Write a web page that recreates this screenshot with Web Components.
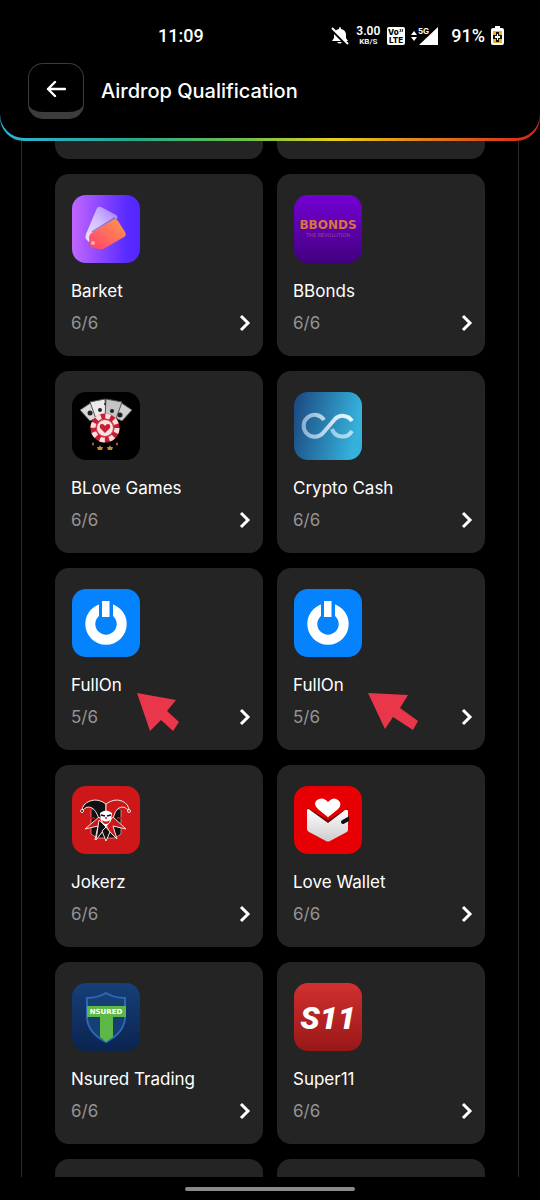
<!DOCTYPE html>
<html lang="en">
<head>
<meta charset="utf-8">
<meta name="viewport" content="width=device-width, initial-scale=1">
<title>Airdrop Qualification</title>
<style>
    body {
        margin: 0;
        background: #000;
        color: #fff;
        font-family: Inter, "Liberation Sans", sans-serif;
    }
</style>
</head>
<body>
<airdrop-app>
    <status-bar slot="top"></status-bar>
    <page-header slot="top">Airdrop Qualification</page-header>

    <app-card cut></app-card>
    <app-card cut></app-card>

    <app-card name="Barket" count="6/6">
        <svg slot="logo" viewBox="0 0 68 68" aria-hidden="true">
            <defs>
                <linearGradient id="barket-bg"><stop stop-color="#c266ff"/><stop offset=".8" stop-color="#5a2bff"/><stop offset="1" stop-color="#5426ff"/></linearGradient>
                <linearGradient id="barket-tag" x1="0" y1="1" x2="1" y2="0"><stop stop-color="#ff4070"/><stop offset="1" stop-color="#ff9a4c"/></linearGradient>
                <linearGradient id="barket-back" x1="0" y1="1" x2="1" y2="0"><stop stop-color="#efe4ff"/><stop offset=".5" stop-color="#d3bdff"/><stop offset="1" stop-color="#9d78f8"/></linearGradient>
            </defs>
            <rect width="68" height="68" fill="url(#barket-bg)"/>
            <path d="M25 13q2-2 4-1l15 8q2 1 1 4L21 38l-4 9-3-3q-1-2 0-5z" fill="url(#barket-back)"/>
            <path d="M20 37l23-14" stroke="#5b3aa8" stroke-width="2" opacity=".5"/>
            <path d="M21 37l20-12q3-2 5 1l7 11q2 3-1 5L33 53q-3 2-6 1l-7-1q-2-1-2-4l-1-6q0-4 4-6z" fill="url(#barket-tag)"/>
            <circle cx="21" cy="48" r="2" fill="#ffb0b0"/>
        </svg>
    </app-card>

    <app-card name="BBonds" count="6/6">
        <svg slot="logo" viewBox="0 0 68 68" aria-hidden="true">
            <defs>
                <linearGradient id="bbonds-bg" x2="0" y2="1"><stop stop-color="#7400d4"/><stop offset="1" stop-color="#430080"/></linearGradient>
            </defs>
            <rect width="68" height="68" fill="url(#bbonds-bg)"/>
            <text x="34" y="34" text-anchor="middle" font-family="DejaVu Sans" font-weight="700" font-size="12" fill="#d9733f">BBONDS</text>
            <text x="34" y="42" text-anchor="middle" font-family="DejaVu Sans" font-size="5" fill="#a2449a">THE REVOLUTION</text>
        </svg>
    </app-card>

    <app-card name="BLove Games" count="6/6">
        <svg slot="logo" viewBox="0 0 68 68" aria-hidden="true">
            <rect width="68" height="68" fill="#000"/>
            <g stroke="#555" stroke-width="1">
                <path d="M8 18L20 10l9 14-11 5z" fill="#d9d9d9"/>
                <path d="M60 18L48 10l-9 14 11 5z" fill="#d0d0d0"/>
                <path d="M18 10l15-3 1 19-10 1z" fill="#ececec"/>
                <path d="M50 10L34 7l-1 19 11 1z" fill="#c4c4c4"/>
            </g>
            <g fill="#222"><circle cx="18" cy="21" r="2.500"/><circle cx="28" cy="18" r="2"/><circle cx="40" cy="19" r="2"/><circle cx="48" cy="23" r="2.500"/><circle cx="33" cy="12" r="1"/></g>
            <circle cx="33" cy="36" r="14.500" fill="#c81e32"/>
            <circle cx="33" cy="36" r="12" fill="none" stroke="#f8dede" stroke-width="5" stroke-dasharray="5 4.420"/>
            <circle cx="33" cy="36" r="8.500" fill="#f6e4e4" stroke="#d83b4b" stroke-width="1"/>
            <path d="M33 41l-5-5q-1-4 2-4 2 0 3 2 1-2 3-2 3 0 2 4z" fill="#c81e32"/>
            <g fill="#c48a2c"><path d="M28 53l1 2h2l-1 3h-4l-1-3h2zM38 53l1 2h2l-1 3h-4l-1-3h2zM21 50l1 2-1 2-1-2zM45 50l1 2-1 2-1-2z"/></g>
        </svg>
    </app-card>

    <app-card name="Crypto Cash" count="6/6">
        <svg slot="logo" viewBox="0 0 68 68" aria-hidden="true">
            <defs>
                <linearGradient id="cash-bg" y2=".2"><stop stop-color="#1b467f"/><stop offset="1" stop-color="#35b2dc"/></linearGradient>
                <linearGradient id="cash-line" gradientUnits="userSpaceOnUse" x1="8" y1="0" x2="60" y2="0"><stop stop-color="#89afd0"/><stop offset=".6" stop-color="#cfe8f4"/><stop offset="1" stop-color="#eefaff"/></linearGradient>
            </defs>
            <rect width="68" height="68" fill="url(#cash-bg)"/>
            <g fill="none" stroke="url(#cash-line)" stroke-width="4">
                <path d="M30 28A11 11 0 1 0 29 41L41 27A11 11 0 0 1 58 29"/>
                <path d="M38 37A11 11 0 0 0 58 39" opacity=".7"/>
            </g>
        </svg>
    </app-card>

    <app-card name="FullOn" count="5/6">
        <svg slot="logo" viewBox="0 0 68 68" aria-hidden="true">
            <rect width="68" height="68" fill="#0583fe"/>
            <circle cx="34" cy="35" r="15.700" fill="none" stroke="#fff" stroke-width="10"/>
            <path d="M27 12h14v15H27z" fill="#0583fe"/>
            <path d="M30 12h7.500v16H30z" fill="#fff"/>
        </svg>
        <svg slot="marker" width="44" height="39" viewBox="0 0 44 39" style="left: 81px; top: 125px" aria-hidden="true">
            <path d="M1 0L40 7l-9 11 12 11-6 9-12-11-11 11z" fill="#e9364b"/>
        </svg>
    </app-card>

    <app-card name="FullOn" count="5/6">
        <svg slot="logo" viewBox="0 0 68 68" aria-hidden="true">
            <rect width="68" height="68" fill="#0583fe"/>
            <circle cx="34" cy="35" r="15.700" fill="none" stroke="#fff" stroke-width="10"/>
            <path d="M27 12h14v15H27z" fill="#0583fe"/>
            <path d="M30 12h7.500v16H30z" fill="#fff"/>
        </svg>
        <svg slot="marker" width="52" height="38" viewBox="0 0 52 38" style="left: 90px; top: 125px" aria-hidden="true">
            <path d="M1 0L41 2l-8 13 18 13-5 9-20-13-8 12z" fill="#e9364b"/>
        </svg>
    </app-card>

    <app-card name="Jokerz" count="6/6">
        <svg slot="logo" viewBox="0 0 68 68" aria-hidden="true">
            <rect width="68" height="68" fill="#cd1719"/>
            <path d="M19 24v24l6 4h18l6-4V24" fill="#111" stroke="#e8b0a8" stroke-width=".7"/>
            <path d="M17 32h6M17 38h7M45 32h6M44 38h7" stroke="#cd1719" stroke-width="1.500"/>
            <g stroke="#f4dfdc" stroke-width="1" stroke-linejoin="round">
                <path d="M34 18Q26 12 18 15 10 18 10 25q5-6 10-3 4 2 7 11l7-4z" fill="#111"/>
                <path d="M34 18q8-6 16-3 7 3 7 10-5-6-10-3-4 2-6 11l-7-4z" fill="#cd1719"/>
                <path d="M27 31L13 43l13-3-3 14 8-9 3-6z" fill="#cd1719"/>
                <path d="M41 31l13 12-13-3 4 13-8-8-3-6z" fill="#cd1719"/>
                <path d="M27 34l-3 20 10-13z" fill="#111"/>
                <path d="M34 41l-4 4 4 10 4-9z" fill="#111"/>
                <circle cx="10" cy="25" r="1.500" fill="#111"/>
                <circle cx="57" cy="25" r="1.500" fill="#cd1719"/>
            </g>
            <path d="M28 27q6-5 12 0l-1 8-5 6-5-6z" fill="#fff"/>
            <path d="M29 29l4 1M35 30l4-1" stroke="#111" stroke-width="1.500"/>
            <path d="M30 34q4 3 8 0-1 4-4 4t-4-4z" fill="#cd1719"/>
            <circle cx="34" cy="32" r="1" fill="#cd1719"/>
        </svg>
    </app-card>

    <app-card name="Love Wallet" count="6/6">
        <svg slot="logo" viewBox="0 0 68 68" aria-hidden="true">
            <defs>
                <linearGradient id="wallet" x2="0" y2="1"><stop stop-color="#fff"/><stop offset="1" stop-color="#ccc"/></linearGradient>
            </defs>
            <rect width="68" height="68" fill="#e60003"/>
            <path d="M34 31L23 22q-4-5 0-8 6-4 11 2 5-6 10-2 5 4 0 9z" fill="#fff"/>
            <path d="M14 22l20 12 20-12v6L34 40 14 28z" fill="#6f0000"/>
            <path d="M34 31L24 23h20z" fill="#fff"/>
            <path d="M13 24q1-2 3 0l18 13 17-13q3-1 3 1v19q0 2-3 3L36 55q-2 1-4 0L15 46q-2-1-2-3z" fill="url(#wallet)"/>
            <path d="M49 36l7-4" stroke="#111" stroke-width="4" stroke-linecap="round"/>
            <path d="M55 28h4v8h-4z" fill="#e60003"/>
        </svg>
    </app-card>

    <app-card name="Nsured Trading" count="6/6">
        <svg slot="logo" viewBox="0 0 68 68" aria-hidden="true">
            <defs>
                <linearGradient id="nsured-bg" x2="0" y2="1"><stop stop-color="#173f78"/><stop offset="1" stop-color="#0a2450"/></linearGradient>
            </defs>
            <rect width="68" height="68" fill="url(#nsured-bg)"/>
            <path d="M34 10q-8 5-19 5v20q1 15 19 24 18-9 19-24V15q-11 0-19-5z" fill="#153f75" stroke="#2d68b4" stroke-width="2"/>
            <path d="M28 34h13v20l-7 5-6-5z" fill="#5eb847"/>
            <path d="M15 23h39v11H15z" fill="#5eb847"/>
            <text x="34" y="31" text-anchor="middle" font-family="DejaVu Sans" font-weight="700" font-size="7" fill="#fff">NSURED</text>
        </svg>
    </app-card>

    <app-card name="Super11" count="6/6">
        <svg slot="logo" viewBox="0 0 68 68" aria-hidden="true">
            <defs>
                <linearGradient id="super-bg" x2="0" y2="1"><stop stop-color="#d23030"/><stop offset="1" stop-color="#981717"/></linearGradient>
            </defs>
            <rect width="68" height="68" fill="url(#super-bg)"/>
            <text x="34" y="46" text-anchor="middle" font-family="Roboto" font-weight="900" font-style="italic" font-size="32" fill="#fff">S11</text>
        </svg>
    </app-card>

    <app-card></app-card>
    <app-card></app-card>
</airdrop-app>

<script>
class AirdropApp extends HTMLElement {

    constructor() {
        super();
        this.attachShadow({mode: 'open'});
    }

    connectedCallback() {
        this.shadowRoot.innerHTML = `
            <style>
                :host {
                    display: flex;
                    flex-direction: column;
                    height: 100vh;
                }
                header {
                    flex: none;
                    padding-bottom: 3px;
                    border-radius: 0 0 24px 24px;
                    background: linear-gradient(90deg, #2bb5dc, #25a98c 25%, #6cbf4a 45%, #e8d020 62%, #e08418 78%, #d8201c);
                }
                .bar {
                    border-radius: 0 0 24px 24px;
                    background: #000;
                }
                main {
                    flex: 1;
                    min-height: 0;
                    overflow: hidden;
                    margin: 0 21px;
                    padding: 0 33px;
                    border: solid #2b2b2b;
                    border-width: 0 1px;
                }
                .grid {
                    display: grid;
                    grid-template-columns: 1fr 1fr;
                    gap: 15px 14px;
                }
                footer {
                    flex: none;
                    display: flex;
                    justify-content: center;
                    align-items: center;
                    height: 23px;
                }
                .pill {
                    width: 170px;
                    height: 4px;
                    border-radius: 2px;
                    background: #8a8a8a;
                }
            </style>
            <header><div class="bar"><slot name="top"></slot></div></header>
            <main><div class="grid"><slot></slot></div></main>
            <footer><div class="pill"></div></footer>
        `;
    }
}
customElements.define('airdrop-app', AirdropApp);

class StatusBar extends HTMLElement {

    constructor() {
        super();
        this.attachShadow({mode: 'open'});
    }

    connectedCallback() {
        this.shadowRoot.innerHTML = `
            <style>
                :host {
                    display: flex;
                    justify-content: space-between;
                    align-items: center;
                    height: 24px;
                    padding: 24px 36px 15px 158px;
                    font: 500 18px/24px Roboto, sans-serif;
                }
                .icons {
                    display: flex;
                    align-items: center;
                }
                svg {
                    display: block;
                    flex: none;
                }
                .speed {
                    display: flex;
                    flex-direction: column;
                    align-items: center;
                    margin: 0 7px;
                    font: 600 12px/12px Roboto, sans-serif;
                }
                .speed small {
                    font-size: 8px;
                    line-height: 10px;
                }
                .signal {
                    margin: 0 12px 0 5px;
                }
                .battery {
                    margin-left: 6px;
                }
            </style>
            <time>11:09</time>
            <div class="icons">
                <svg width="18" height="18" viewBox="0 0 18 18" fill="#fff" aria-label="Muted">
                    <path d="M9 0q1 0 1 2 5 1 5 6v3l2 3H1l2-3V8q0-5 5-6 0-2 1-2zM6 15h5q-2 3-5 0z"/>
                    <path d="M0 2l17 17" stroke="#000" stroke-width="3"/>
                    <path d="M1 1l16 16" stroke="#fff" stroke-width="2"/>
                </svg>
                <div class="speed">3.00<small>KB/S</small></div>
                <svg width="18" height="18" viewBox="0 0 18 18" font-family="Inter" font-weight="800">
                    <rect width="18" height="18" rx="2" fill="#fff"/>
                    <text x="1" y="8" font-size="8">Vo</text>
                    <path d="M13 5q1-2 0-3M15 5q1-2 0-3" fill="none" stroke="#000"/>
                    <text x="2" y="16" font-size="8">LTE</text>
                </svg>
                <svg class="signal" width="29" height="20" viewBox="0 0 29 20" fill="#fff" font-family="Inter" font-weight="700">
                    <path d="M1 9l3-4 3 4zM1 11l3 4 3-4z"/>
                    <path d="M28 1v18H9z"/>
                    <text x="8" y="8" font-size="8">5G</text>
                </svg>
                <span>91%</span>
                <svg class="battery" width="13" height="20" viewBox="0 0 13 20">
                    <path d="M4 0h5v2h2q2 0 2 2v13q0 2-2 2H2q-2 0-2-2V4q0-2 2-2h2z" fill="#fff"/>
                    <path d="M2 5h9v12H2z" fill="#f3ad2e"/>
                    <path d="M5 6h3v3h3v4H8v3H5v-3H2V9h3z" fill="#111"/>
                    <path d="M6 8h1v2h2v2H7v2H6v-2H4v-2h2z" fill="#fff"/>
                </svg>
            </div>
        `;
    }
}
customElements.define('status-bar', StatusBar);

class PageHeader extends HTMLElement {

    constructor() {
        super();
        this.attachShadow({mode: 'open'});
    }

    connectedCallback() {
        this.shadowRoot.innerHTML = `
            <style>
                :host {
                    display: flex;
                    align-items: center;
                    gap: 17px;
                    padding: 0 28px 19px;
                }
                button {
                    display: flex;
                    align-items: center;
                    justify-content: center;
                    box-sizing: border-box;
                    width: 56px;
                    height: 56px;
                    padding: 0;
                    border: 1px solid #3c3c3c;
                    border-bottom-width: 7px;
                    border-radius: 15px;
                    background: #000;
                }
                h1 {
                    margin: 0;
                    font-size: 20px;
                    line-height: 24px;
                    font-weight: 500;
                }
            </style>
            <button type="button" aria-label="Back">
                <svg width="20" height="18" viewBox="0 0 20 18" fill="none" stroke="#fff" stroke-width="2.400" stroke-linecap="round" stroke-linejoin="round"><path d="M19 10H2M9 3l-7 7 7 7"/></svg>
            </button>
            <h1><slot></slot></h1>
        `;
    }
}
customElements.define('page-header', PageHeader);

class AppCard extends HTMLElement {

    constructor() {
        super();
        this.attachShadow({mode: 'open'});
    }

    getStyles() {
        return `
            <style>
                :host {
                    display: block;
                    position: relative;
                    box-sizing: border-box;
                    height: 182px;
                    border-radius: 14px;
                    background: #242424;
                }
                :host([cut]) {
                    height: 18px;
                    border-radius: 0 0 14px 14px;
                }
                a {
                    display: block;
                    padding: 21px 12px 20px 16px;
                    color: inherit;
                    text-decoration: none;
                }
                ::slotted([slot="logo"]) {
                    display: block;
                    width: 68px;
                    height: 68px;
                    margin-left: 1px;
                    border-radius: 14px;
                }
                ::slotted([slot="marker"]) {
                    position: absolute;
                }
                h2 {
                    margin: 17px 0 9px;
                    font-size: 17px;
                    line-height: 22px;
                    font-weight: 400;
                }
                .row {
                    display: flex;
                    justify-content: space-between;
                    align-items: center;
                    color: #949494;
                    font-size: 17px;
                    line-height: 24px;
                }
            </style>
        `;
    }

    connectedCallback() {
        const name = this.getAttribute('name');
        if (!name) {
            this.shadowRoot.innerHTML = this.getStyles();
            return;
        }
        this.shadowRoot.innerHTML = `
            ${this.getStyles()}
            <a href="#">
                <slot name="logo"></slot>
                <h2>${name}</h2>
                <div class="row">
                    <span>${this.getAttribute('count')}</span>
                    <svg width="12" height="18" viewBox="0 0 12 18" fill="none" stroke="#fff" stroke-width="3"><path d="M2 2l7 7-7 7"/></svg>
                </div>
            </a>
            <slot name="marker"></slot>
        `;
    }
}
customElements.define('app-card', AppCard);
</script>
</body>
</html>
